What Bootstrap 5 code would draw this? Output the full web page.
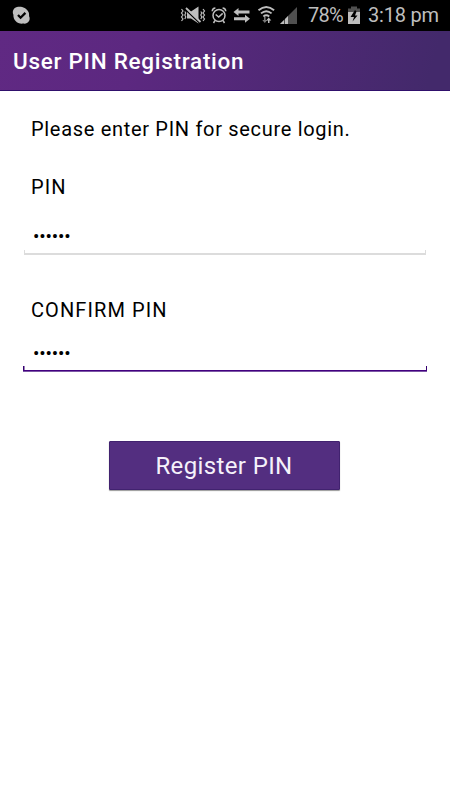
<!DOCTYPE html>
<html lang="en">
<head>
<meta charset="utf-8">
<meta name="viewport" content="width=device-width, initial-scale=1">
<title>User PIN Registration</title>
<link href="https://cdn.jsdelivr.net/npm/bootstrap@5.3.0/dist/css/bootstrap.min.css" rel="stylesheet">
<style>
body{font-family:Roboto,"Liberation Sans",sans-serif;min-height:800px;overflow:hidden}
.statusbar{height:31px;background:#000;color:#bebebe;font-size:20px;line-height:33px}
.statusbar svg{display:block;flex:none}
.status-pct{margin-left:10px;width:36px;letter-spacing:-.75px}
.status-time{margin-left:8px;letter-spacing:-.2px}
.titlebar{height:60px;background:linear-gradient(105deg,#602983,#5c2880 30%,#43296b 95%);border-bottom:1px solid #30106c;padding:0 13px!important}
.titlebar h1{font:500 22.5px/60px Roboto,sans-serif;letter-spacing:.72px}
.pin-form{padding:25px 23px 0}
.pin-form p,.pin-form label{font-size:20px;line-height:26px;padding-left:8px;color:#000}
.pin-form p{letter-spacing:.69px;margin-bottom:32px}
.pin-form label{font-weight:400;letter-spacing:1.1px}
.pin-input.form-control{--edge:#dcdcdc;height:36px;border:0;border-radius:0;padding:0 10px 2px;font:19px/34px Roboto,sans-serif;letter-spacing:-.15px;color:#000;box-shadow:none;
background:linear-gradient(var(--edge),var(--edge)) bottom/100% 2px no-repeat,linear-gradient(var(--edge),var(--edge)) left bottom/1px 5px no-repeat,linear-gradient(var(--edge),var(--edge)) right bottom/1px 5px no-repeat}
.pin-input.resting{margin:19px 1px 42px;width:402px;padding-left:9px}
.pin-input.active-field{margin-top:13px;background:linear-gradient(#430080 50%,#7c57a5 50%) bottom/100% 2px no-repeat,linear-gradient(#350070,#350070) left bottom/1.5px 6px no-repeat,linear-gradient(#350070,#350070) right bottom/1.5px 6px no-repeat}
.register.btn{width:231px;height:49px;margin:69px 2px 0 0;padding:0;border:1px solid #41226f;border-radius:1px;background:#532e80;color:#f5f1fa;font-size:24px;line-height:48px;letter-spacing:.38px;box-shadow:0 1px 1px #999}
</style>
</head>
<body class="bg-white">
<header class="statusbar d-flex align-items-center">
<svg width="176" height="31" viewBox="0 0 176 31"><path fill="#bebebe" d="M17 7.1C20.8 5.900 26.400 7.700 28.500 12c.7 1.400.6 3.100.6 4.200 2 4-1.400 8.300-5.900 7.400C17.600 24.400 13 20 13.400 14.700 11.900 11.800 13.500 7.700 17 7.100Z"/><path d="m18 15 2.600 2.700 4.800-4.800" fill="none" stroke="#000" stroke-width="2.300"/></svg>
<svg width="122" height="31" viewBox="176 0 122 31" fill="none" stroke="#bebebe">
<path stroke-width="1.200" d="m181.500 9 1.500 2-1.500 2 1.500 2-1.500 2 1.500 2-1.500 2M184.800 11.500l1 1.500-1 2 1 2-1 2M203 9l1.500 2-1.500 2 1.500 2-1.500 2 1.500 2-1.500 2M200.800 11.500l1 1.500-1 2 1 2-1 2"/>
<path fill="#bebebe" stroke="none" d="M187 11.500h4l7.500-5v17l-7.500-5h-4Z"/><path stroke="#000" stroke-width="1.500" d="m186.500 10.500 12.500 12"/><path stroke-width="1.800" d="m186 8 14.500 14"/>
<circle cx="219" cy="15.500" r="6" stroke-width="1.500"/><path stroke-width="1.500" d="m215.700 14.500 3 2.500 4-3.600M212.200 11.200c.2-2 1.400-3.100 3.200-3.200M222.600 8c1.800.1 3 1.200 3.200 3.200M215 20.500l-1.500 2.500M223 20.500l1.500 2.500"/>
<path fill="#bebebe" stroke="none" d="M233.500 12l5-4v2.500h11v3h-11V16ZM250 18.800l-5-4v2.500h-11v3h11v2.500Z"/>
<path stroke-width="1.900" d="M258.500 10.200q7.800-6.600 15.600 0M261 13.400q5.300-4.500 10.600 0M263.400 16.500q2.900-2.400 5.800 0"/>
<path fill="#777" stroke="none" d="m264.800 23-2.500-3h1.700v-3h1.600v3h1.700Z"/><path fill="#bebebe" stroke="none" d="m268.700 17.500 2.600 3h-1.800V23H268v-2.500h-1.800Z"/>
<path fill="#505050" stroke="none" d="M297 7v17h-17Z"/><path fill="#bebebe" stroke="none" d="M280 24l4-4v4ZM285 24v-5l3-3v8Z"/>
</svg>
<span class="status-pct">78%</span>
<svg class="ms-1" width="12" height="31" viewBox="0 0 12 31"><path fill="#505050" d="M3 6.500h6V9H3ZM0 8.500h12V13H0Z"/><path fill="#bebebe" d="M0 12h12v12H0Z"/><path d="M7 10 2.500 17H6l-1.500 4.500 5-6H7l1.500-4Z"/></svg>
<span class="status-time text-nowrap">3:18 pm</span>
</header>
<div class="titlebar navbar"><h1 class="text-white m-0">User PIN Registration</h1></div>
<main>
<form class="pin-form">
<p>Please enter PIN for secure login.</p>
<label class="d-block" for="pin">PIN</label>
<input class="form-control pin-input resting" id="pin" type="password" value="123456">
<label class="d-block" for="confirm">CONFIRM PIN</label>
<input class="form-control pin-input active-field" id="confirm" type="password" value="123456">
<div class="text-center"><button class="btn register" type="button">Register PIN</button></div>
</form>
</main>
<script src="https://cdn.jsdelivr.net/npm/bootstrap@5.3.0/dist/js/bootstrap.bundle.min.js"></script>
</body>
</html>
